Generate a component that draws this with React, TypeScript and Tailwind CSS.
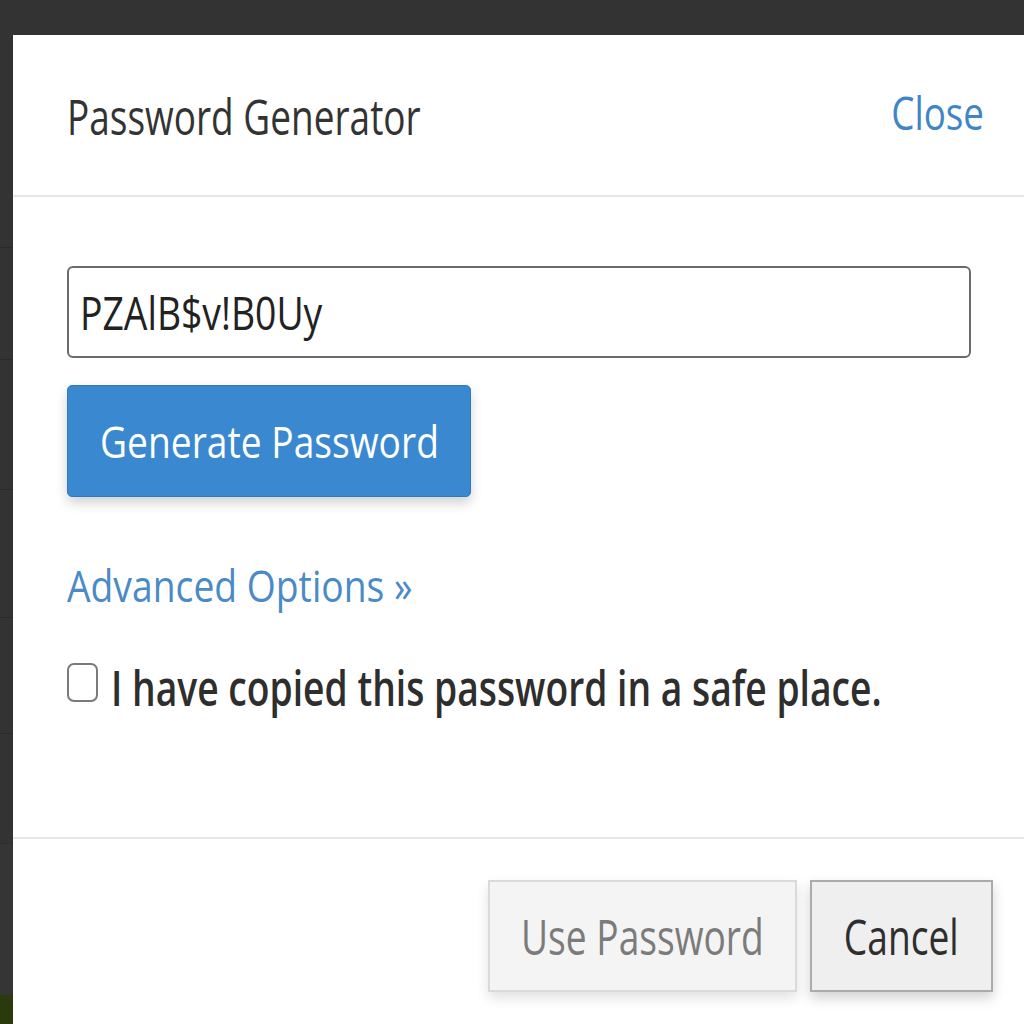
import React from "react";

const font = { fontFamily: '"Open Sans", "Liberation Sans", sans-serif' };

function Squeeze({ children, cls }: { children: React.ReactNode; cls: string }) {
  return <span className={`inline-block whitespace-nowrap ${cls}`}>{children}</span>;
}

export default function App() {
  return (
    <div className="w-[1024px] h-[1024px] bg-[#2f2f2f] flex flex-col overflow-hidden" style={font}>
      {/* backdrop top strip */}
      <div className="h-[35px] bg-[#333333] shrink-0" />

      <div className="flex flex-1 min-h-0">
        {/* backdrop left strip */}
        <div className="w-[13px] shrink-0 flex flex-col bg-[#333333]">
          <div className="h-[213px] border-b border-[#292929]" />
          <div className="h-[112px] border-b border-[#292929]" />
          <div className="h-[130px] border-b border-[#2a2a2a]" />
          <div className="h-[128px] border-b border-[#2a2a2a]" />
          <div className="h-[116px] border-b border-[#2a2a2a]" />
          <div className="h-[110px] border-b border-[#2e2e2e]" />
          <div className="flex-1 bg-[#353535]" />
          <div className="h-[29px] bg-[#2a3a0c]" />
        </div>

        {/* modal */}
        <div className="flex-1 min-w-0 overflow-hidden bg-white flex flex-col">
          <div className="h-[162px] shrink-0 border-b-2 border-[#e6e6e6] flex justify-between pl-[54px] pr-[40px]">
            <h2 className="mt-[57px] text-[49px] leading-none font-normal text-[#333333]">
              <Squeeze cls="origin-left scale-x-[0.755]">Password Generator</Squeeze>
            </h2>
            <a className="mt-[54px] text-[46px] leading-none text-[#3f86c6] w-[100px] flex justify-end">
              <Squeeze cls="origin-right scale-x-[0.8]">Close</Squeeze>
            </a>
          </div>

          <div className="h-[640px] shrink-0 pl-[54px] pr-[53px] pt-[69px]">
            <div className="h-[92px] border-2 border-[#6b6b6b] rounded-[6px] flex items-center pl-[11px] overflow-hidden">
              <span className="text-[45px] leading-none text-[#222222]">
                <Squeeze cls="origin-left scale-x-[0.83]">PZAlB$v!B0Uy</Squeeze>
              </span>
            </div>

            <button className="mt-[27px] w-[404px] h-[112px] bg-[#3a88d0] border border-[#2f79bf] rounded-[5px] shadow-[0_6px_12px_rgba(0,0,0,0.18)] flex items-center justify-center text-white text-[44px] leading-none">
              <Squeeze cls="origin-center scale-x-[0.845]">Generate Password</Squeeze>
            </button>

            <div className="mt-[66px] text-[44px] leading-none text-[#4a8ac7]">
              <Squeeze cls="origin-left scale-x-[0.847]">Advanced Options »</Squeeze>
            </div>

            <label className="mt-[56px] flex items-start gap-[13px]">
              <span className="w-[31px] h-[39px] border-2 border-[#7a7a7a] rounded-[7px] bg-white shrink-0" />
              <span className="text-[49px] leading-none font-semibold text-[#2e2e2e]">
                <Squeeze cls="origin-left scale-x-[0.76]">I have copied this password in a safe place.</Squeeze>
              </span>
            </label>
          </div>

          <div className="flex-1 border-t-2 border-[#e6e6e6] flex justify-end items-start pt-[41px] pr-[31px] gap-[13px]">
            <button className="w-[309px] h-[112px] shrink-0 bg-[#f4f4f4] border-2 border-[#dadada] shadow-[0_6px_12px_rgba(0,0,0,0.12)] flex items-center justify-center text-[50px] leading-none text-[#7b7b7b]">
              <Squeeze cls="origin-center scale-x-[0.743]">Use Password</Squeeze>
            </button>
            <button className="w-[183px] h-[112px] shrink-0 bg-[#efefef] border-2 border-[#ababab] shadow-[0_6px_12px_rgba(0,0,0,0.18)] flex items-center justify-center text-[50px] leading-none text-[#2e2e2e]">
              <Squeeze cls="origin-center scale-x-[0.743]">Cancel</Squeeze>
            </button>
          </div>
        </div>
      </div>
    </div>
  );
}
